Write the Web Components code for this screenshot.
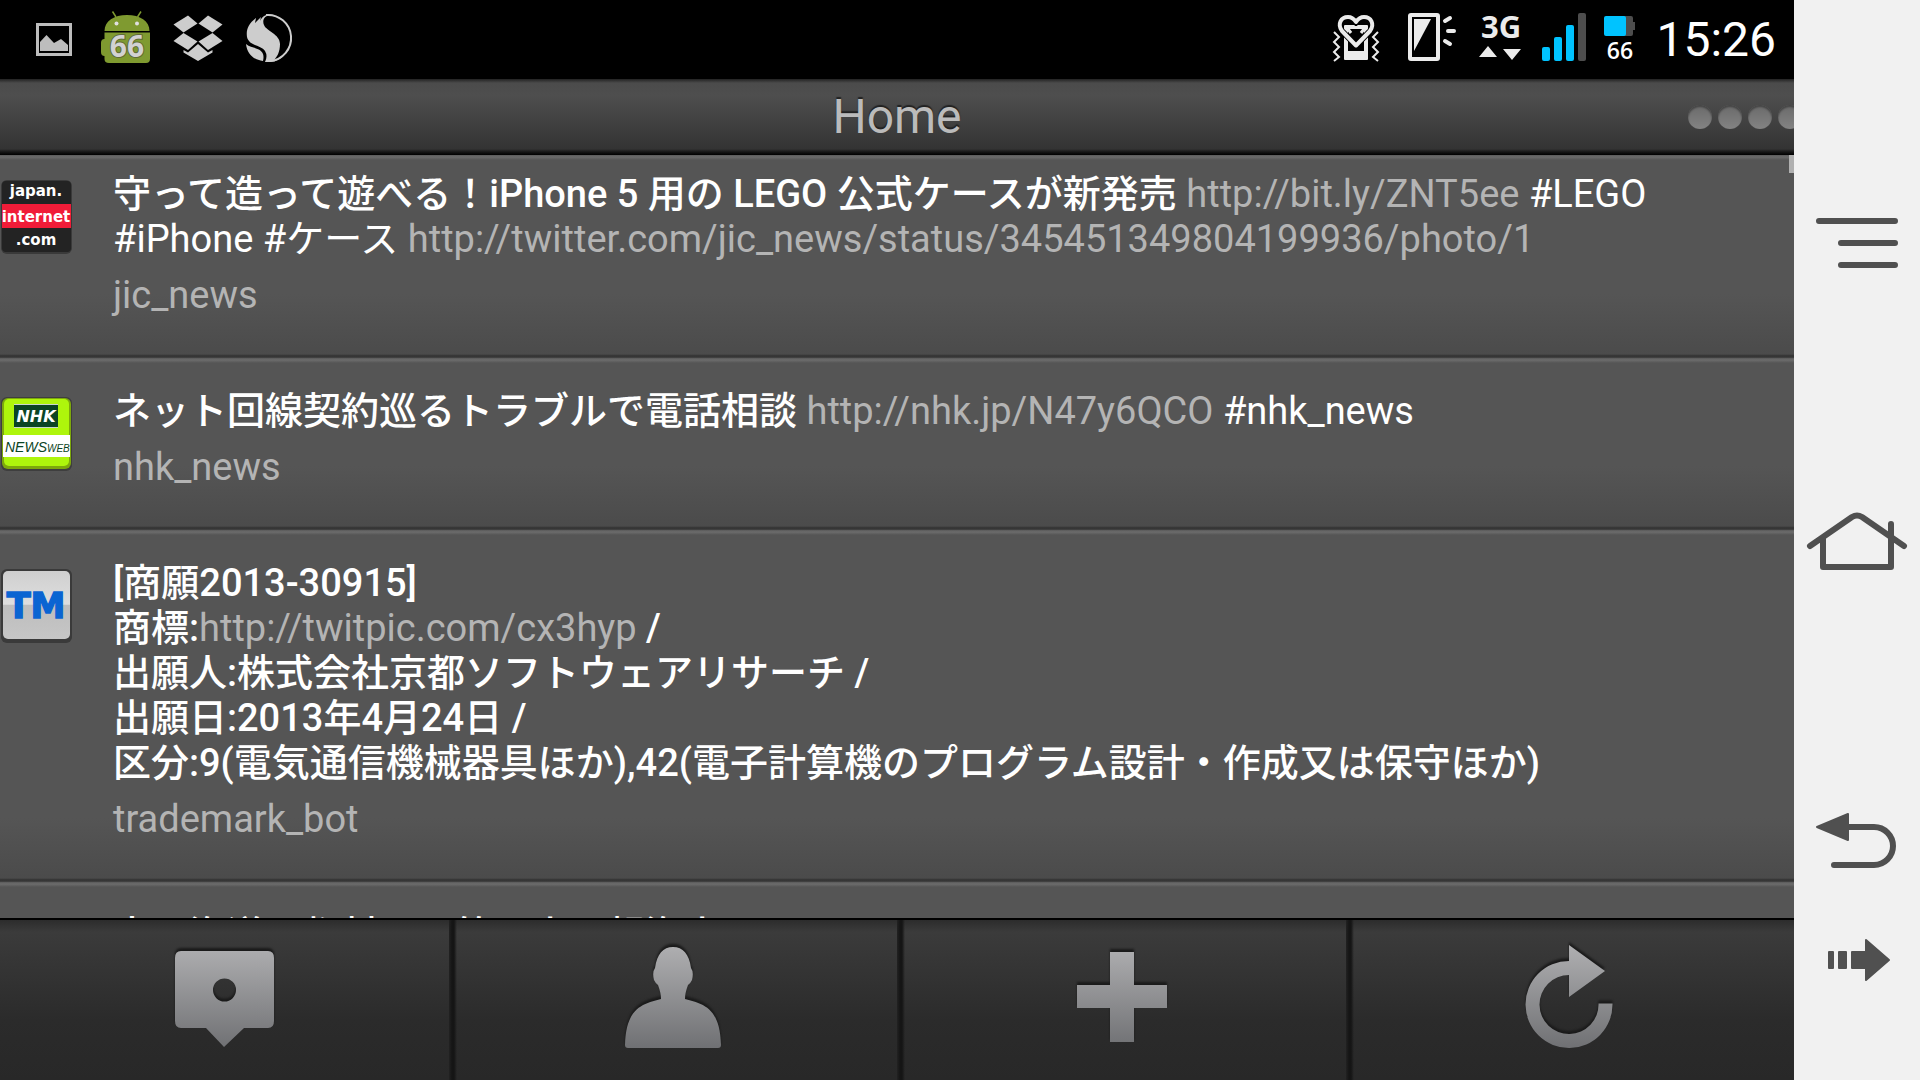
<!DOCTYPE html>
<html lang="ja">
<head>
<meta charset="utf-8">
<title>Home</title>
<style>
    body {
        margin: 0;
        background: #000;
        font-family: Roboto, "Noto Sans CJK JP", sans-serif;
    }

    /* links inside the tweets are slotted, so they are styled here */
    tweet-row a { color: #b4b4b4; font-weight: 400; text-decoration: none; }
    tweet-row a.tag { color: #fff; }
    tweet-row svg { display: block; width: 72px; height: 74px; }
</style>
</head>
<body>

<phone-screen>
    <status-bar slot="status"></status-bar>
    <title-bar slot="title">Home</title-bar>

    <tweet-list slot="content">
        <tweet-row first user="jic_news">
            <svg slot="avatar" viewBox="0 0 72 74" font-family="DejaVu Sans, sans-serif" font-weight="700" font-size="15" fill="#fff" text-anchor="middle">
                <rect x="1" width="71" height="74" rx="6" fill="#3a3a3a"/>
                <rect x="2" y="1" width="69" height="71" rx="4" fill="#232323"/>
                <rect x="2" y="24" width="69" height="24" fill="#f01c38"/>
                <text x="36" y="16">japan.</text>
                <text x="36" y="42">internet</text>
                <text x="36" y="65">.com</text>
            </svg>
            守って造って遊べる！iPhone 5 用の LEGO 公式ケースが新発売 <a href="#">http://bit.ly/ZNT5ee</a> <a class="tag" href="#">#LEGO</a> <a class="tag" href="#">#iPhone</a> <a class="tag" href="#">#ケース</a> <a href="#">http://twitter.com/jic_news/status/345451349804199936/photo/1</a>
        </tweet-row>

        <tweet-row user="nhk_news">
            <svg slot="avatar" viewBox="0 0 72 74" font-family="Liberation Sans, sans-serif" font-style="italic">
                <rect x="1" width="71" height="74" rx="6" fill="#3e3e3e"/>
                <rect x="2" y="1" width="69" height="71" rx="6" fill="#7da80c"/>
                <rect x="4" y="2" width="65" height="67" rx="5" fill="#aef50c"/>
                <rect x="14" y="7" width="44" height="24" fill="#c9d6cf"/>
                <rect x="14" y="8" width="44" height="22" fill="#0b4424"/>
                <text x="36" y="25" font-family="DejaVu Sans, sans-serif" font-size="16" font-weight="700" fill="#fff" text-anchor="middle">NHK</text>
                <rect x="3" y="38" width="67" height="22" fill="#fff"/>
                <text x="5" y="55" font-size="14" fill="#0b4424">NEWS<tspan font-size="10">WEB</tspan></text>
            </svg>
            ネット回線契約巡るトラブルで電話相談 <a href="#">http://nhk.jp/N47y6QCO</a> <a class="tag" href="#">#nhk_news</a>
        </tweet-row>

        <tweet-row user="trademark_bot">
            <svg slot="avatar" viewBox="0 0 72 74">
                <defs>
                    <linearGradient id="tm" x2="0" y2="1">
                        <stop offset="0" stop-color="#cfcfcf"/>
                        <stop offset=".49" stop-color="#dedede"/>
                        <stop offset=".5" stop-color="#bdbdbd"/>
                        <stop offset="1" stop-color="#c6c6c6"/>
                    </linearGradient>
                </defs>
                <rect x="1" width="71" height="74" rx="6" fill="#3a3a3a"/>
                <rect x="3" y="2" width="67" height="68" rx="5" fill="url(#tm)"/>
                <text x="36" y="49" font-family="DejaVu Sans, sans-serif" font-size="35" font-weight="700" fill="#0a64d2" stroke="#0a64d2" stroke-width="1.500" text-anchor="middle">TM</text>
            </svg>
            [商願2013-30915]<br>
            商標:<a href="#">http://twitpic.com/cx3hyp</a> /<br>
            出願人:株式会社京都ソフトウェアリサーチ /<br>
            出願日:2013年4月24日 /<br>
            区分:9(電気通信機械器具ほか),42(電子計算機のプログラム設計・作成又は保守ほか)
        </tweet-row>

        <tweet-row user="">大雨海道取都対しの竹の小、報海小</tweet-row>
    </tweet-list>

    <tab-bar slot="tabs"></tab-bar>
    <nav-rail slot="rail"></nav-rail>
</phone-screen>

<script>
/* BASE */
class Part extends HTMLElement {
    constructor() {
        super();
        this.attachShadow({ mode: 'open' });
        this.render();
    }

    css() { return ''; }
    template() { return '<slot></slot>'; }

    render() {
        this.shadowRoot.innerHTML = `
            <style>
                :host, * { box-sizing: border-box; }
                ${this.css()}
            </style>
            ${this.template()}
        `;
    }
}


/* LAYOUT */
class PhoneScreen extends Part {
    css() {
        return `
            :host {
                display: grid;
                grid-template-columns: minmax(0, 1fr) 126px;
                height: 100vh;
            }

            main {
                display: grid;
                grid-template-rows: auto auto minmax(0, 1fr) auto;
                min-height: 0;
            }
        `;
    }

    template() {
        return `
            <main>
                <slot name="status"></slot>
                <slot name="title"></slot>
                <slot name="content"></slot>
                <slot name="tabs"></slot>
            </main>
            <slot name="rail"></slot>
        `;
    }
}
customElements.define('phone-screen', PhoneScreen);


/* STATUS BAR */
class StatusBar extends Part {
    css() {
        return `
            :host {
                display: flex;
                justify-content: space-between;
                height: 79px;
                padding: 0 18px;
                background: #000;
                color: #ebebeb;
            }

            svg { display: block; height: 79px; overflow: visible; }
            .notes, .system { display: flex; align-items: center; }
            .system { gap: 20px; }
            time { color: #fff; font-size: 48px; line-height: 79px; }
        `;
    }

    template() {
        return `
            <div class="notes">
                <svg width="72" viewBox="0 0 72 79">
                    <rect x="19.500" y="24.500" width="33" height="30" fill="none" stroke="#bdbdbd" stroke-width="3"/>
                    <path d="M22 51V42L28.500 35L36 43L43 39L50 45V51Z" fill="#bdbdbd"/>
                </svg>
                <svg width="72" viewBox="0 0 72 79">
                    <g fill="#7f9a30">
                        <path d="M14.500 31C14.500 21 24 15 37 15S59.500 21 59.500 31Z"/>
                        <path d="M14.500 32.500H60V59Q60 63 56 63H19Q14.500 63 14.500 59V56Q11 56 11 52V43Q11 39 14.500 39Z"/>
                    </g>
                    <path d="M22.500 11.500L26 17M51 11.500L47.500 17" stroke="#7f9a30" stroke-width="1.500"/>
                    <circle cx="26.500" cy="23.500" r="2" fill="#e0e0e0"/>
                    <circle cx="47" cy="23.500" r="2" fill="#e0e0e0"/>
                    <text x="37" y="57" font-family="Open Sans, sans-serif" font-size="30" font-weight="700" fill="#d2d2d2" stroke="#5f6b3a" stroke-width="2" paint-order="stroke" text-anchor="middle">66</text>
                </svg>
                <svg width="72" viewBox="0 0 72 79" fill="#cdcdcd">
                    <path d="M11.500 24.500L26 15.500L35.500 23.500L21.500 32.500Z"/>
                    <path d="M60.500 24.500L46 15.500L36.500 23.500L50.500 32.500Z"/>
                    <path d="M11.500 41L21.500 33L35.500 41.500L26 50Z"/>
                    <path d="M60.500 41L50.500 33L36.500 41.500L46 50Z"/>
                    <path d="M21.500 50L26 52.500L36 44L46 52.500L50.500 50V52.500L36 61L21.500 52.500Z"/>
                </svg>
                <svg width="72" viewBox="0 0 72 79" fill="#cdcdcd">
                    <path d="M32 15A23 23 0 1 1 36 61" fill="none" stroke="#cdcdcd" stroke-width="2"/>
                    <path d="M13 37C12 30 14 24 22 18L21 23L27 17L26 21C28 17 31 14 38 14C30 16 28 20 30 25C32 31 46 34 46 44C46 52 43 57 40 60Q46 59 51 54Q45 62 36 62H31Q34 56 31 51C27 45 15 46 13 37Z"/>
                    <path d="M12 44C18 49 26 47 29 54Q30 57 29 61C20 60 13 54 12 44Z"/>
                </svg>
            </div>

            <div class="system">
                <svg width="54" viewBox="0 0 54 79">
                    <path d="M4 32L9 37L4 42L9 47L4 52L9 57L4 61M48 32L43 37L48 42L43 47L48 52L43 57L48 61" fill="none" stroke="#ebebeb" stroke-width="2"/>
                    <rect x="14" y="25" width="24" height="35" rx="1" fill="#ebebeb"/>
                    <rect x="18" y="29" width="16" height="22" fill="#000"/>
                    <path d="M26 45.500L12 31C7 24 11 17 18 17C22 17 24 19 26 22C28 19 30 17 34 17C41 17 45 24 40 31Z" fill="none" stroke="#000" stroke-width="6"/>
                    <path d="M26 45.500L12 31C7 24 11 17 18 17C22 17 24 19 26 22C28 19 30 17 34 17C41 17 45 24 40 31Z" fill="none" stroke="#ebebeb" stroke-width="4" stroke-linejoin="round"/>
                    <path d="M15 27.500H37M18 29L21 33M34 29L31 33" fill="none" stroke="#ebebeb" stroke-width="3"/>
                </svg>
                <svg width="56" viewBox="0 0 56 79">
                    <rect x="6" y="15" width="28" height="44" rx="1" fill="none" stroke="#ebebeb" stroke-width="4"/>
                    <path d="M10 19H27L10 51Z" fill="#ebebeb"/>
                    <path d="M41 21L46 18M44 31H50M41 41L46 44" stroke="#ebebeb" stroke-width="4" stroke-linecap="round"/>
                </svg>
                <svg width="42" viewBox="0 0 42 79" fill="#ebebeb">
                    <text x="21" y="38" font-family="Open Sans, sans-serif" font-size="31" font-weight="700" text-anchor="middle">3G</text>
                    <path d="M-1 57L8 46L17 57ZM23 49H41L32 60Z"/>
                </svg>
                <svg width="42" viewBox="0 0 42 79" fill="#00c3ff">
                    <rect y="47" width="8" height="14" rx="2"/>
                    <rect x="12" y="37" width="8" height="24" rx="2"/>
                    <rect x="24" y="25" width="8" height="36" rx="2"/>
                    <rect x="36" y="13" width="8" height="48" rx="2" fill="#4d4d4d"/>
                </svg>
                <svg width="32" viewBox="0 0 32 79">
                    <path d="M20 16H27Q29 16 29 18V22H31V30H29V34Q29 36 27 36H20Z" fill="#4d4d4d"/>
                    <rect y="16" width="22" height="20" rx="2" fill="#00c3ff"/>
                    <text x="16" y="59" font-family="Open Sans, sans-serif" font-size="23" font-weight="600" fill="#fff" text-anchor="middle">66</text>
                </svg>
                <time>15:26</time>
            </div>
        `;
    }
}
customElements.define('status-bar', StatusBar);


/* TITLE BAR */
class TitleBar extends Part {
    css() {
        return `
            :host {
                display: grid;
                grid-template-columns: 1fr auto 1fr;
                align-items: center;
                height: 76px;
                background: linear-gradient(#222, #4b4b4b 4px, #4e4e4e 16px, #333 70px, #161616 73px, #000 76px);
            }

            h1 {
                grid-column: 2;
                margin: 0;
                color: #bbb;
                font-size: 48px;
                font-weight: 400;
                line-height: 76px;
                text-shadow: 0 -2px 1px #222;
            }

            .dots {
                display: flex;
                justify-self: end;
                gap: 6px;
                width: 106px;
                overflow: hidden;
            }

            .dots i {
                flex: none;
                width: 24px;
                height: 24px;
                border-radius: 50%;
                background: linear-gradient(#6a6a6a, #838383);
                box-shadow: inset 0 2px 2px #444;
            }
        `;
    }

    template() {
        return `
            <h1><slot></slot></h1>
            <div class="dots"><i></i><i></i><i></i><i></i></div>
        `;
    }
}
customElements.define('title-bar', TitleBar);


/* TWEETS */
class TweetList extends Part {
    css() {
        return `
            :host {
                display: block;
                position: relative;
                overflow: hidden;
                background: #555;
            }

            .thumb {
                position: absolute;
                top: 0;
                right: 0;
                width: 5px;
                height: 18px;
                background: #b0b0b0;
            }
        `;
    }

    template() {
        return `
            <slot></slot>
            <div class="thumb"></div>
        `;
    }
}
customElements.define('tweet-list', TweetList);


class TweetRow extends Part {
    static get observedAttributes() {
        return ['user'];
    }

    attributeChangedCallback() {
        this.render();
    }

    css() {
        return `
            :host {
                display: grid;
                grid-template-columns: 72px minmax(0, 1fr);
                column-gap: 41px;
                padding: 31px 0 40px;
                background: linear-gradient(#5a5a5a, #6c6c6c 2px, #555 5px, #555 calc(100% - 64px), #4b4b4b calc(100% - 4px), #303030 calc(100% - 2px), #454545);
            }

            /* the top of the first row is scrolled under the title */
            :host([first]) { padding-top: 17px; }

            .avatar { padding-top: 8px; }

            p, footer { margin: 0; font-size: 38px; line-height: 45px; }
            p { color: #fff; font-weight: 500; }
            footer { margin-top: 11px; color: #b4b4b4; min-height: 45px; }
        `;
    }

    template() {
        return `
            <div class="avatar"><slot name="avatar"></slot></div>
            <div>
                <p><slot></slot></p>
                <footer>${this.getAttribute('user') || ''}</footer>
            </div>
        `;
    }
}
customElements.define('tweet-row', TweetRow);


/* TAB BAR */
class TabBar extends Part {
    css() {
        return `
            :host {
                display: grid;
                grid-template-columns: repeat(4, 1fr);
                height: 162px;
                border-top: 2px solid #000;
                background: linear-gradient(#2c2c2c, #3b3b3b 12px, #2b2b2b 100px, #282828);
            }

            button {
                display: flex;
                justify-content: center;
                align-items: center;
                border: none;
                padding: 0 0 2px;
                background: none;
                cursor: pointer;
            }

            button + button { background: linear-gradient(90deg, #222, #151515 3px, #151515 5px, transparent 8px); }
            svg { width: 110px; height: 110px; overflow: visible; filter: drop-shadow(0 -3px 1px #1a1a1a); }
        `;
    }

    icon(label, shape) {
        return `
            <button aria-label="${label}">
                <svg viewBox="0 0 110 110">
                    <defs>
                        <linearGradient id="g" gradientUnits="userSpaceOnUse" x1="0" y1="0" x2="0" y2="110">
                            <stop offset="0" stop-color="#b0b0b2"/>
                            <stop offset="1" stop-color="#6c6d70"/>
                        </linearGradient>
                    </defs>
                    <g fill="url(#g)">${shape}</g>
                </svg>
            </button>
        `;
    }

    template() {
        return `
            ${this.icon('Location', '<path fill-rule="evenodd" d="M12 7H99Q105 7 105 14V77Q105 84 99 84H75L55 103L37 84H12Q6 84 6 77V14Q6 7 12 7ZM55.500 34.500a11.500 11.500 0 1 0 0 23a11.500 11.500 0 1 0 0-23Z"/>')}
            ${this.icon('Profile', '<path d="M55 3C65 3 71 10 73 24Q76 28 74 36Q72 40 70 41Q67 49 67 55C86 60 102 64 103 101Q103 104 100 104H10Q7 104 7 101C8 64 24 60 43 55Q43 49 40 41Q38 40 36 36Q34 28 37 24C39 10 45 3 55 3Z"/>')}
            ${this.icon('New', '<path d="M44 8H68V41H101V64H68V98H44V64H11V41H44Z"/>')}
            ${this.icon('Refresh', '<path d="M54 1L90 27L54 53V31A29.500 29.500 0 1 0 83.500 59.500H97.500A43.500 43.500 0 1 1 54 17Z"/>')}
        `;
    }
}
customElements.define('tab-bar', TabBar);


/* SYSTEM KEYS */
class NavRail extends Part {
    css() {
        return `
            :host {
                display: flex;
                flex-direction: column;
                justify-content: space-between;
                padding: 183px 0 60px;
                background: #f1f1f1;
            }

            button {
                display: block;
                width: 100%;
                height: 120px;
                border: none;
                padding: 0;
                background: none;
                cursor: pointer;
            }

            svg { display: block; width: 126px; height: 120px; }
        `;
    }

    key(label, shape) {
        return `
            <button aria-label="${label}">
                <svg viewBox="0 0 126 120" fill="none" stroke="#505050" stroke-width="6" stroke-linecap="round" stroke-linejoin="round">${shape}</svg>
            </button>
        `;
    }

    template() {
        return `
            ${this.key('Menu', '<path d="M25 38H101M47 60H101M47 82H101"/>')}
            ${this.key('Home', '<path d="M16 64L58 35Q63 32 68 35L110 64M29 56V85H97V42"/>')}
            <div>
                ${this.key('Back', '<path d="M55 47H80A19 19 0 0 1 80 85H40"/><path d="M23 47L54 34V60Z" fill="#505050" stroke-width="2"/>')}
                ${this.key('Forward', '<g fill="#505050" stroke-width="2"><path d="M35 52H39V68H35ZM45 52H52V68H45Z"/><path d="M58 52H72V40L95 60L72 80V68H58Z"/></g>')}
            </div>
        `;
    }
}
customElements.define('nav-rail', NavRail);
</script>
</body>
</html>
